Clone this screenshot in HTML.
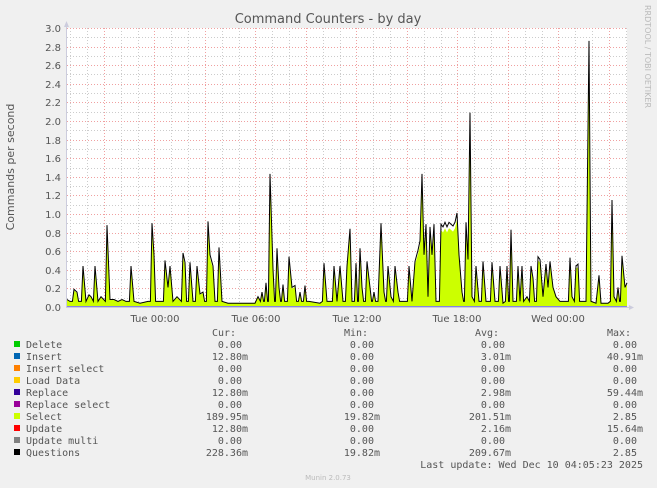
<!DOCTYPE html>
<html><head><meta charset="utf-8"><style>
html,body{margin:0;padding:0;background:#f0f0f0;}
svg{display:block}
.m{font-family:"DejaVu Sans Mono","Liberation Mono",monospace;font-size:10px;fill:#555;}
.s{font-family:"DejaVu Sans","Liberation Sans",sans-serif;fill:#555;}
</style></head><body>
<svg id="g" width="657" height="488" xmlns="http://www.w3.org/2000/svg">
<rect x="0" y="0" width="657" height="488" fill="#f0f0f0"/>
<rect x="67" y="28" width="560" height="279" fill="#fff"/>
<g id="grid"></g>
<path id="sel" fill="#ccff00" stroke="none"/>
<path id="q" fill="none" stroke="#000" stroke-width="1"/>
<line x1="67" y1="306.5" x2="627" y2="306.5" stroke="#33c" stroke-width="1" opacity="0.6"/>
<line x1="66.5" y1="24" x2="66.5" y2="308" stroke="#ccd" stroke-width="1"/>
<line x1="66" y1="307.5" x2="631" y2="307.5" stroke="#ccd" stroke-width="1"/>
<polygon points="64,27 69,27 66.5,21" fill="#ccd"/>
<polygon points="629,305 629,310 634,307.5" fill="#ccd"/>
<text class="s" x="328" y="23" font-size="13" text-anchor="middle">Command Counters - by day</text>
<text class="s" x="14" y="167" font-size="11" text-anchor="middle" transform="rotate(-90 14 167)">Commands per second</text>
<text x="645" y="5" font-size="8" style="fill:#bbb;font-family:'DejaVu Sans',sans-serif" transform="rotate(90 645 5)">RRDTOOL / TOBI OETIKER</text>
<g id="yl" class="s" font-size="10" text-anchor="end"></g>
<g class="s" font-size="10" text-anchor="middle">
<text x="155" y="322">Tue 00:00</text><text x="256" y="322">Tue 06:00</text><text x="357" y="322">Tue 12:00</text><text x="457" y="322">Tue 18:00</text><text x="558" y="322">Wed 00:00</text>
</g>
<g id="leg"></g>
<text x="328" y="480" font-size="7" text-anchor="middle" style="fill:#bbb;font-family:'DejaVu Sans',sans-serif">Munin 2.0.73</text>
</svg>
<script>
var NS="http://www.w3.org/2000/svg";
function el(p,t,a,txt){var e=document.createElementNS(NS,t);for(var k in a)e.setAttribute(k,a[k]);if(txt!=null)e.textContent=txt;p.appendChild(e);return e;}
var grid=document.getElementById('grid');
for(var i=1;i<30;i++){var y=307-i*9.3;if(i%2==0)continue;el(grid,'line',{x1:67,x2:627,y1:Math.round(y)+.5,y2:Math.round(y)+.5,stroke:'#ccc','stroke-dasharray':'1,2'});}
for(var x=70.3;x<627;x+=16.83){el(grid,'line',{x1:Math.round(x)+.5,x2:Math.round(x)+.5,y1:28,y2:307,stroke:'#ccc','stroke-dasharray':'1,2'});}
var yl=document.getElementById('yl');
for(var i=0;i<=15;i++){var y=Math.round(307-i*18.6);if(i>0)el(grid,'line',{x1:67,x2:627,y1:y+.5,y2:y+.5,stroke:'#f0a0a0','stroke-dasharray':'1,2'});el(yl,'text',{x:61,y:y+4},(i*0.2).toFixed(1));}
for(var x=103.5;x<627;x+=50.5){el(grid,'line',{x1:Math.round(x)+.5,x2:Math.round(x)+.5,y1:28,y2:307,stroke:'#f0a0a0','stroke-dasharray':'1,2'});}
var P=[67,.07,70,.05,74,.18,77,.15,83,.43,86,.05,89,.12,91,.1,95,.43,98,.05,101,.1,107,.87,110,.07,114,.07,118,.05,122,.07,126,.05,131,.43,134,.05,140,.03,148,.05,152,.89,154,.55,158,.05,165,.49,168,.2,170,.43,173,.05,177,.1,183,.57,185,.47,190,.47,193,.05,197,.43,200,.13,203,.15,208,.91,210,.55,213,.43,215,.05,219,.63,222,.05,228,.03,255,.03,258,.1,262,.15,266,.25,270,1.42,273,.4,277,.62,279,.2,283,.23,289,.53,292,.2,295,.22,300,.15,305,.22,309,.05,320,.03,324,.46,327,.05,334,.43,337,.05,340,.43,343,.05,347,.43,350,.83,352,.05,356,.46,360,.62,362,.2,367,.48,370,.2,374,.15,378,.05,381,.89,384,.15,388,.43,391,.1,395,.43,398,.15,402,.05,409,.43,412,.05,415,.48,418,.6,420,.7,422,1.42,424,.55,426,.88,428,.1,430,.85,432,.55,434,.88,436,.05,441,.88,443,.85,445,.9,447,.85,449,.9,451,.88,453,.86,455,.9,457,1.0,459,.55,462,.15,466,.9,468,.5,470,2.08,472,.1,476,.43,479,.05,483,.48,486,.05,492,.47,495,.05,500,.43,503,.03,507,.43,511,.82,513,.05,518,.43,520,.05,522,.43,527,.1,531,.43,533,.3,538,.53,540,.5,543,.1,546,.45,548,.2,550,.48,553,.2,556,.1,560,.05,570,.52,572,.1,576,.43,578,.45,582,.05,586,.05,589,2.85,591,.05,596,.03,599,.33,601,.03,608,.03,612,1.14,614,.1,618,.2,622,.54,625,.2,627,.25];
var pts=[];
for(var i=0;i<P.length;i+=2){var x=P[i],v=P[i+1];
 if(i>0){var px=P[i-2],pv=P[i-1];if(v>.12&&x-px>3.5){pts.push([x-1.6,(pv>.6&&v>.6)?Math.min(pv,v)*.6:.05]);}}
 pts.push([x,v]);
 if(i+2<P.length){var nx=P[i+2],nv=P[i+3];if(v>.12&&nx-x>3.5){pts.push([x+1.6,(v>.6&&nv>.6)?Math.min(v,nv)*.6:.05]);}}}
function Y(v){return 306-v*93;}
var d='M'+pts.map(function(p){return p[0].toFixed(1)+','+Y(p[1]).toFixed(1)}).join(' L');
document.getElementById('q').setAttribute('d',d);
var ds='M67,306 L'+pts.map(function(p){return p[0].toFixed(1)+','+Y(p[1]*0.93).toFixed(1)}).join(' L')+' L627,306 Z';
document.getElementById('sel').setAttribute('d',ds);
var leg=document.getElementById('leg');
var L=[['Delete','#00cc00','0.00 ','0.00 ','0.00 ','0.00 '],['Insert','#0066b3','12.80m','0.00 ','3.01m','40.91m'],['Insert select','#ff8000','0.00 ','0.00 ','0.00 ','0.00 '],['Load Data','#ffcc00','0.00 ','0.00 ','0.00 ','0.00 '],['Replace','#330099','12.80m','0.00 ','2.98m','59.44m'],['Replace select','#990099','0.00 ','0.00 ','0.00 ','0.00 '],['Select','#ccff00','189.95m','19.82m','201.51m','2.85 '],['Update','#ff0000','12.80m','0.00 ','2.16m','15.64m'],['Update multi','#808080','0.00 ','0.00 ','0.00 ','0.00 '],['Questions','#000000','228.36m','19.82m','209.67m','2.85 ']];
var cols=[248,380,511,643];
var hd=['Cur:','Min:','Avg:','Max:'],hx=[212,344,475,607];
for(var j=0;j<4;j++)el(leg,'text',{x:hx[j],y:336,'class':'m'},hd[j]);
for(var i=0;i<L.length;i++){var y=348+i*12;el(leg,'rect',{x:14,y:y-7,width:6,height:6,fill:L[i][1]});el(leg,'text',{x:26,y:y,'class':'m'},L[i][0]);
for(var j=0;j<4;j++){el(leg,'text',{x:cols[j],y:y,'class':'m','text-anchor':'end'},L[i][2+j].replace(' ','\u00a0'));}}
el(leg,'text',{x:643,y:468,'class':'m','text-anchor':'end'},'Last update: Wed Dec 10 04:05:23 2025');
</script>
</body></html>
